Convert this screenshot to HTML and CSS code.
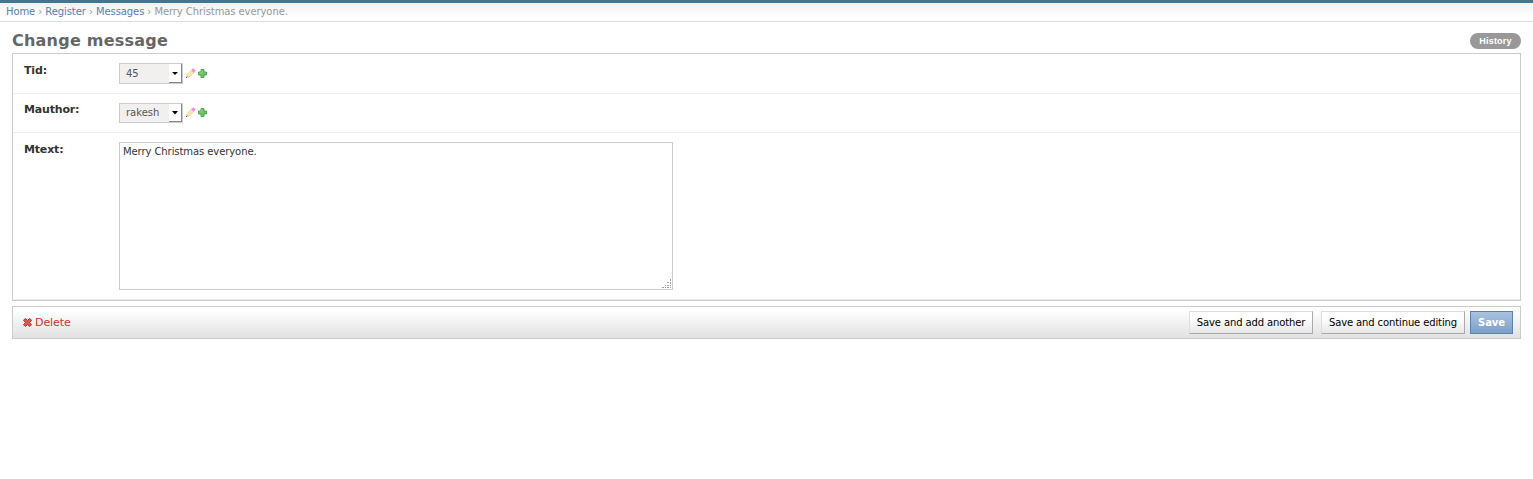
FILE: index.html
```html
<!DOCTYPE html>
<html lang="en">
<head>
<meta charset="utf-8">
<title>Change message</title>
<link rel="stylesheet" href="styles.css">
</head>
<body>
<svg width="0" height="0" class="defs">
  <symbol id="pencil" viewBox="0 0 10 10">
    <path d="M1 6.5 6 1.5 8.5 4 3.5 9 1 9z" fill="#fbe9a8"/>
    <path d="M1 6.5 6 1.5M3.5 9 8.5 4" stroke="#dfc084" stroke-width=".6"/>
    <path d="M5.2 2.3 7.3.2 9.8 2.6 7.7 4.8z" fill="#ee8fe6"/>
    <path d="M.6 7 3 9.3.2 9.8z" fill="#c8b89c"/>
    <path d="M0 9h1v1H0z" fill="#555"/>
  </symbol>
  <symbol id="plus" viewBox="0 0 9 9">
    <path d="M3 .5h3V3h2.5v3H6v2.5H3V6H.5V3H3z" fill="#6cc268" stroke="#4a9e4b" stroke-width=".9"/>
    <path d="M4 1.2v2.7H1.2" fill="none" stroke="#93d590" stroke-width=".7"/>
  </symbol>
</svg>
<div class="topbar"></div>
<nav class="breadcrumbs"><a>Home</a> › <a>Register</a> › <a>Messages</a> › Merry Christmas everyone.</nav>
<main class="content">
  <header class="heading"><h1>Change message</h1><a class="history">History</a></header>
  <section class="module">
    <div class="row tid">
      <label>Tid:</label>
      <div class="select"><span>45</span><i class="arrow"><svg width="6" height="3"><path d="M0 0h6L3 3z"/></svg></i></div>
      <svg class="icon"><use href="#pencil"/></svg><svg class="icon add"><use href="#plus"/></svg>
    </div>
    <div class="row author">
      <label>Mauthor:</label>
      <div class="select"><span>rakesh</span><i class="arrow"><svg width="6" height="4"><path d="M0 0h6L3 3.5z"/></svg></i></div>
      <svg class="icon"><use href="#pencil"/></svg><svg class="icon add"><use href="#plus"/></svg>
    </div>
    <div class="row text">
      <label>Mtext:</label>
      <div class="textarea"><span>Merry Christmas everyone.</span>
        <svg class="grip" width="10" height="10" fill="#a0a0a0"><path d="M8 0h1v2H8zM8 3h1v2H8zM5 3h2v1H5zM8 6h1v1H8zM5 6h2v1H5zM3 6h1v1H3zM8 8h1v1H8zM5 8h2v1H5zM3 8h1v1H3zM0 8h2v1H0z"/></svg>
      </div>
    </div>
  </section>
  <footer class="submit">
    <a class="delete"><svg width="9" height="9" viewBox="0 0 9 9"><path d="M2.3 .5 4.5 2.4 6.7 .5 8.5 2.3 6.6 4.5 8.5 6.7 6.7 8.5 4.5 6.6 2.3 8.5 .5 6.7 2.4 4.5 .5 2.3z" fill="#e25555" stroke="#bb3131"/></svg><span>Delete</span></a>
    <button class="btn another">Save and add another</button>
    <button class="btn continue">Save and continue editing</button>
    <button class="btn save">Save</button>
  </footer>
</main>
</body>
</html>
```
FILE: styles.css
```css
* { box-sizing: border-box; }
body { margin: 0; background: #fff; color: #333; font-family: "DejaVu Sans", sans-serif; font-size: 11px; }
.defs { display: block; }
.topbar { height: 3px; background: #417690; }
.breadcrumbs { height: 19px; padding: 0 6px; border-bottom: 1px solid #ddd; background: linear-gradient(#f1f1f1, #fff 80%); color: #999; font-size: 10px; line-height: 17px; letter-spacing: -.085px; white-space: nowrap; }
.breadcrumbs a { color: #5b80b2; }
.content { padding: 0 12px; }
.heading { height: 31px; display: flex; justify-content: space-between; }
h1 { margin: 9px 0 0; color: #666; font-size: 16px; line-height: 20px; letter-spacing: .23px; white-space: nowrap; }
.history { width: 51px; height: 16px; margin-top: 11px; border-radius: 8px; background: #999; color: #fff; font: bold 9px/16px "Liberation Sans", sans-serif; letter-spacing: .2px; text-align: center; }
.module { height: 248px; border: 1px solid #ccc; }
.row { display: flex; align-items: flex-start; padding: 9px 0 0 11px; border-bottom: 1px solid #eee; }
.tid { height: 40px; }
.author { height: 39px; }
.text { height: 167px; }
label { width: 95px; font-weight: bold; line-height: 15px; letter-spacing: -.17px; }
.author label { margin-top: -1px; }
.select { display: flex; width: 64px; height: 21px; padding-left: 6px; justify-content: space-between; border: 1px solid #ccc; background: #f1f0ef; color: #555; font-size: 10px; line-height: 19px; }
.author .select { height: 20px; line-height: 18px; }
.arrow { width: 13px; padding-top: 1px; display: flex; align-items: center; justify-content: center; background: #fff; border-right: 1px solid #888; border-bottom: 1px solid #888; }
.icon { width: 10px; height: 10px; margin: 5px 0 0 3px; }
.author .icon { margin-top: 4px; }
.icon.add { width: 9px; height: 9px; margin: 6px 0 0 2px; }
.author .icon.add { margin-top: 5px; }
.textarea { width: 554px; height: 148px; border: 1px solid #ccc; padding: 2px 3px; font-size: 10px; line-height: 13px; letter-spacing: -.08px; position: relative; }
.grip { position: absolute; right: 0; bottom: 0; }
.submit { height: 33px; margin-top: 5px; padding: 4px 7px 0 10px; display: flex; border: 1px solid #ccc; background: linear-gradient(#fff 10%, #e1e1e1); }
.delete { display: flex; gap: 3px; height: 22px; align-items: center; margin-right: auto; color: #cc3434; letter-spacing: -.08px; }
.delete svg { margin-top: 1px; }
.btn { height: 23px; margin: 0; padding: 0 0 1px; border: 1px solid; border-color: #ddd #aaa #aaa #ddd; background: linear-gradient(#fff, #fff 30%, #e7e7e7); color: #000; font: 10px "DejaVu Sans", sans-serif; letter-spacing: -.12px; white-space: nowrap; }
.another { width: 124px; margin-right: 8px; }
.continue { width: 144px; margin-right: 5px; }
.save { width: 43px; border-color: #5b80b2; background: linear-gradient(#a9c3df, #7ca0c7); color: #fff; font-weight: bold; }
```
